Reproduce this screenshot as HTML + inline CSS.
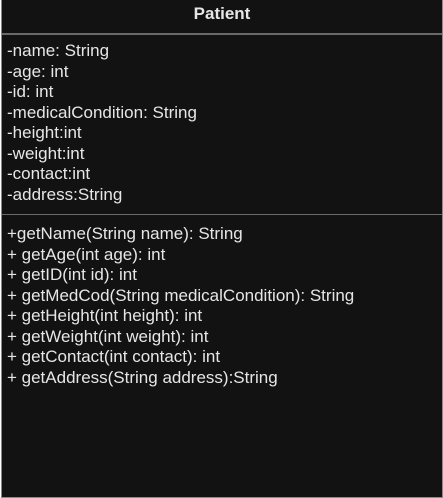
<!DOCTYPE html>
<html><head><style>
html,body{margin:0;padding:0;background:#fff;width:443px;height:497px;overflow:hidden}
.box{position:absolute;left:1px;top:-1px;width:440px;height:497px;background:#121212;border:1px solid #8a8a8a;font-family:"Liberation Sans",sans-serif;color:#e6e6e6}
.t{position:absolute;left:0;right:0;top:5px;text-align:center;font-weight:bold;font-size:17px;line-height:18px}
.hr{position:absolute;left:0;right:0;height:2px;background:#6a6a6a}
.l{position:absolute;left:5px;font-size:17px;line-height:20.5px;white-space:pre}
</style></head><body>
<div class="box">
<div class="t">Patient</div>
<div class="hr" style="top:33px"></div>
<div class="l" style="top:41px">-name: String
-age: int
-id: int
-medicalCondition: String
-height:int
-weight:int
-contact:int
-address:String</div>
<div class="hr" style="top:214px;height:1px"></div>
<div class="l" style="top:224px">+getName(String name): String
+ getAge(int age): int
+ getID(int id): int
+ getMedCod(String medicalCondition): String
+ getHeight(int height): int
+ getWeight(int weight): int
+ getContact(int contact): int
+ getAddress(String address):String</div>
</div>
</body></html>
